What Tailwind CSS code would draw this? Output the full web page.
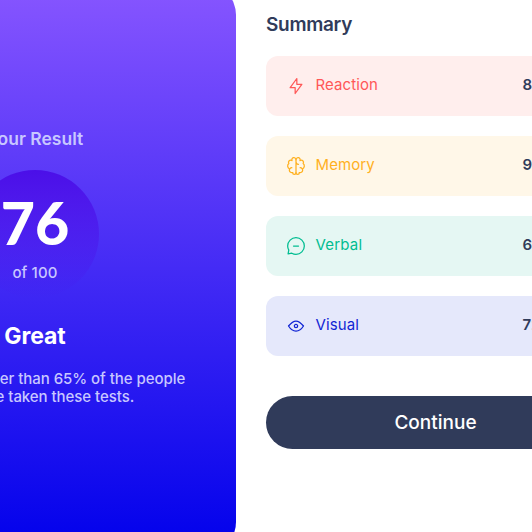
<!DOCTYPE html>
<html lang="en">
<head>
<meta charset="utf-8">
<title>Results summary</title>
<script src="https://cdn.jsdelivr.net/npm/@tailwindcss/browser@4"></script>
</head>
<body class="h-screen overflow-hidden bg-white font-['Inter','Liberation_Sans',sans-serif]">
<main class="-ml-[166px] -mt-[17px] flex h-[571px] w-[804px]">
  <section class="flex w-[402px] shrink-0 flex-col items-center rounded-[32px] bg-linear-to-b/srgb from-[#8856ff] to-[#0000eb] text-center text-[#c8c7ff]">
    <h2 class="mt-[143px] text-[17.5px] leading-[26px] font-semibold">Your Result</h2>
    <div class="mt-[18px] flex size-[128px] flex-col items-center rounded-full bg-linear-to-b/srgb from-[#4b0fe8] to-[#4020f0]/0">
      <p class="mt-[17px] font-['Lato','Inter',sans-serif] text-[59px] leading-[72px] font-black text-white">76</p>
      <p class="mt-[4px] text-[15px] leading-5 font-medium tracking-[0.15px]">of 100</p>
    </div>
    <h3 class="mt-[22px] text-[23px] leading-8 font-bold tracking-[-0.1px] text-white">Great</h3>
    <p class="mt-[18px] text-[15px] leading-[18px] font-medium tracking-[-0.05px] whitespace-nowrap">You scored higher than 65% of the people<br>who have taken these tests.</p>
  </section>
  <section class="flex grow flex-col pt-[27px] pl-[30px] text-[#303b5a]">
    <h2 class="text-[19px] leading-[30px] font-semibold tracking-[-0.3px]">Summary</h2>
    <ul class="mt-4 flex flex-col gap-5 text-[15px]">
      <li class="flex h-[60px] items-center rounded-xl bg-[#ffeeed] pr-5 pl-5 text-[#ff5757]">
        <svg class="size-5" viewBox="0 0 20 20" fill="none" stroke="currentColor" stroke-width="1.25"><path d="M10.833 8.333V2.5l-6.666 9.167h5V17.5l6.666-9.167h-5Z" stroke-linecap="round" stroke-linejoin="round"/></svg>
        <span class="mb-[2px] ml-[9.5px] w-[207px] shrink-0 tracking-[0.1px]">Reaction</span><span class="mb-[2px] text-[15px] font-semibold whitespace-nowrap text-[#303b5a]">80 / 100</span>
      </li>
      <li class="flex h-[60px] items-center rounded-xl bg-[#fff7e8] pr-5 pl-5 text-[#ffb01f]">
        <svg class="size-5" viewBox="0 0 20 20" fill="none" stroke="currentColor" stroke-width="1.25" stroke-linecap="round" stroke-linejoin="round"><path d="M5.833 11.667a2.5 2.5 0 1 0 .834 4.858"/><path d="M3.553 13.004a3.333 3.333 0 0 1-.728-5.53m.025-.067a2.083 2.083 0 0 1 2.983-2.824m.199.054A2.083 2.083 0 1 1 10 3.75v12.917a1.667 1.667 0 0 1-3.333 0M10 5.833a2.5 2.5 0 0 0 2.5 2.5m1.667 3.334a2.5 2.5 0 1 1-.834 4.858"/><path d="M16.447 13.004a3.334 3.334 0 0 0 .728-5.53m-.025-.067a2.083 2.083 0 0 0-2.983-2.824M10 3.75a2.085 2.085 0 0 1 2.538-2.033 2.084 2.084 0 0 1 1.43 2.92m-.635 12.03a1.667 1.667 0 0 1-3.333 0"/></svg>
        <span class="mb-[2px] ml-[9.5px] w-[207px] shrink-0 tracking-[0.1px]">Memory</span><span class="mb-[2px] text-[15px] font-semibold whitespace-nowrap text-[#303b5a]">92 / 100</span>
      </li>
      <li class="flex h-[60px] items-center rounded-xl bg-[#e5f7f3] pr-5 pl-5 text-[#00bd91]">
        <svg class="size-5" viewBox="0 0 20 20" fill="none" stroke="currentColor" stroke-width="1.25" stroke-linecap="round" stroke-linejoin="round"><path d="M7.5 10h5"/><path d="M10 18.333A8.333 8.333 0 1 0 1.667 10c0 1.518.406 2.942 1.115 4.167l-.699 3.75 3.75-.699A8.295 8.295 0 0 0 10 18.333Z"/></svg>
        <span class="mb-[2px] ml-[9.5px] w-[207px] shrink-0 tracking-[0.2px]">Verbal</span><span class="mb-[2px] text-[15px] font-semibold whitespace-nowrap text-[#303b5a]">61 / 100</span>
      </li>
      <li class="flex h-[60px] items-center rounded-xl bg-[#e5e8fb] pr-5 pl-5 text-[#1125d4]">
        <svg class="size-5" viewBox="0 0 20 20" fill="none" stroke="currentColor" stroke-width="1.25" stroke-linecap="round" stroke-linejoin="round"><path d="M10 11.667a1.667 1.667 0 1 0 0-3.334 1.667 1.667 0 0 0 0 3.334Z"/><path d="M17.5 10c-1.574 2.492-4.402 5-7.5 5s-5.926-2.508-7.5-5C4.416 7.632 6.66 5 10 5s5.584 2.632 7.5 5Z"/></svg>
        <span class="mb-[2px] ml-[9.5px] w-[207px] shrink-0 tracking-[0.1px]">Visual</span><span class="mb-[2px] text-[15px] font-semibold whitespace-nowrap text-[#303b5a]">72 / 100</span>
      </li>
    </ul>
    <button class="mt-10 h-[53px] w-[339px] shrink-0 rounded-full bg-[#303b5a] pt-[2px] text-[19px] font-medium text-white">Continue</button>
  </section>
</main>
</body>
</html>
